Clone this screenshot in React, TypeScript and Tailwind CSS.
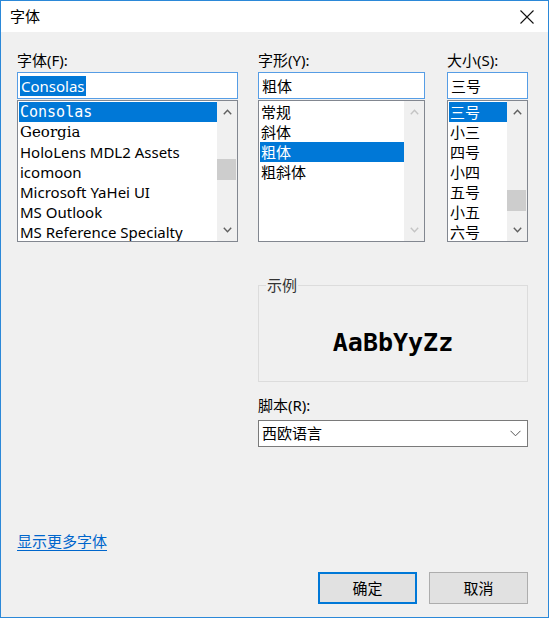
import React from 'react';

const UI = '"Noto Sans", "Noto Sans CJK SC", sans-serif';

function ArrowUp({ disabled }: { disabled?: boolean }) {
  return (
    <svg width="9" height="6" viewBox="0 0 9 6" className="block">
      <polyline points="0.8,5.2 4.5,1.3 8.2,5.2" fill="none" stroke={disabled ? '#c4c4c4' : '#606060'} strokeWidth="1.4" />
    </svg>
  );
}

function ArrowDown({ disabled }: { disabled?: boolean }) {
  return (
    <svg width="9" height="6" viewBox="0 0 9 6" className="block">
      <polyline points="0.8,0.8 4.5,4.7 8.2,0.8" fill="none" stroke={disabled ? '#c4c4c4' : '#606060'} strokeWidth="1.4" />
    </svg>
  );
}

type Item = { label: string; font?: string };

function ScrollBar({ thumbTop, disabled }: { thumbTop?: number; disabled?: boolean }) {
  return (
    <div className="relative flex w-[20px] shrink-0 flex-col items-center justify-between bg-[#f0f0f0] py-[8px]">
      <ArrowUp disabled={disabled} />
      {thumbTop !== undefined && (
        <div className="absolute left-0 h-[21px] w-[19px] bg-[#cdcdcd]" style={{ top: thumbTop }} />
      )}
      <ArrowDown disabled={disabled} />
    </div>
  );
}

function ListBox({
  items,
  selected,
  thumbTop,
  disabled,
}: {
  items: Item[];
  selected: number;
  thumbTop?: number;
  disabled?: boolean;
}) {
  return (
    <div className="mt-[1px] flex h-[142px] border border-[#828790] bg-white">
      <div className="flex-1 overflow-hidden pl-[1px] pt-[1px]">
        {items.map((it, i) => (
          <div
            key={it.label}
            className={`h-[20px] whitespace-nowrap pl-[1px] text-[15px] leading-[20px] ${
              i === selected ? 'bg-[#0078d7] text-white' : 'text-black'
            }`}
            style={{ fontFamily: it.font ?? UI }}
          >
            {it.label}
          </div>
        ))}
      </div>
      <ScrollBar thumbTop={thumbTop} disabled={disabled} />
    </div>
  );
}

function Field({ value, highlight }: { value: string; highlight?: boolean }) {
  return (
    <div className="mt-[2px] flex h-[27px] items-center border border-[#569de5] bg-white pl-[2px]">
      <span
        className={`text-[15px] leading-[20px] ${highlight ? 'bg-[#0078d7] px-[1px] text-white' : 'px-[1px] text-black'}`}
      >
        {value}
      </span>
    </div>
  );
}

function Label({ text }: { text: string }) {
  return <div className="h-[20px] text-[15px] leading-[20px] text-black">{text}</div>;
}

export default function App() {
  const fonts: Item[] = [
    { label: 'Consolas', font: '"DejaVu Sans Mono", monospace' },
    { label: 'Georgia', font: '"DejaVu Serif", serif' },
    { label: 'HoloLens MDL2 Assets' },
    { label: 'icomoon' },
    { label: 'Microsoft YaHei UI' },
    { label: 'MS Outlook' },
    { label: 'MS Reference Specialty' },
  ];
  const styles: Item[] = [{ label: '常规' }, { label: '斜体' }, { label: '粗体' }, { label: '粗斜体' }];
  const sizes: Item[] = [
    { label: '三号' },
    { label: '小三' },
    { label: '四号' },
    { label: '小四' },
    { label: '五号' },
    { label: '小五' },
    { label: '六号' },
  ];

  return (
    <div
      className="flex h-[618px] w-[549px] flex-col border border-[#2b88d8] bg-[#f0f0f0] text-black"
      style={{ fontFamily: UI }}
    >
      {/* title bar */}
      <div className="flex h-[31px] shrink-0 items-center justify-between bg-white pl-[9px] pr-[14px]">
        <span className="text-[15px]">字体</span>
        <svg width="14" height="14" viewBox="0 0 14 14">
          <path d="M0.5 0.5 L13.5 13.5 M13.5 0.5 L0.5 13.5" stroke="#111" strokeWidth="1.1" />
        </svg>
      </div>

      <div className="flex flex-1 flex-col pl-[16px] pr-[20px] pt-[18px]">
        <div className="flex">
          <div className="w-[221px]">
            <Label text="字体(F):" />
            <Field value="Consolas" highlight />
            <ListBox items={fonts} selected={0} thumbTop={58} />
          </div>
          <div className="ml-[20px] w-[167px]">
            <Label text="字形(Y):" />
            <Field value="粗体" />
            <ListBox items={styles} selected={2} disabled />
          </div>
          <div className="ml-[22px] w-[81px]">
            <Label text="大小(S):" />
            <Field value="三号" />
            <ListBox items={sizes} selected={0} thumbTop={89} />
          </div>
        </div>

        <div className="ml-[241px] mt-[33px] w-[270px]">
          <fieldset className="h-[107px] border border-[#dcdcdc]">
            <legend className="ml-[7px] px-[1px] text-[15px] leading-[20px] text-[#333]">示例</legend>
            <div className="flex h-[80px] items-center justify-center pt-[14px]">
              <span
                className="text-[25px] font-bold leading-none"
                style={{ fontFamily: '"DejaVu Sans Mono", monospace' }}
              >
                AaBbYyZz
              </span>
            </div>
          </fieldset>

          <div className="mt-[13px]">
            <Label text="脚本(R):" />
          </div>
          <div className="mt-[5px] flex h-[27px] items-center justify-between border border-[#7a7a7a] bg-white pl-[3px] pr-[6px]">
            <span className="text-[15px]">西欧语言</span>
            <svg width="11" height="7" viewBox="0 0 11 7">
              <polyline points="0.5,0.8 5.5,5.8 10.5,0.8" fill="none" stroke="#555" strokeWidth="1" />
            </svg>
          </div>
        </div>

        <div className="mt-[84px] h-[20px] text-[15px] leading-[20px]">
          <span className="text-[#0066cc] underline underline-offset-[3px]">显示更多字体</span>
        </div>

        <div className="mt-[21px] flex justify-end gap-[12px]">
          <button className="flex h-[32px] w-[99px] items-center justify-center border-2 border-[#0078d7] bg-[#e1e1e1] text-[15px]">
            确定
          </button>
          <button className="flex h-[32px] w-[99px] items-center justify-center border border-[#adadad] bg-[#e1e1e1] text-[15px]">
            取消
          </button>
        </div>
      </div>
    </div>
  );
}
